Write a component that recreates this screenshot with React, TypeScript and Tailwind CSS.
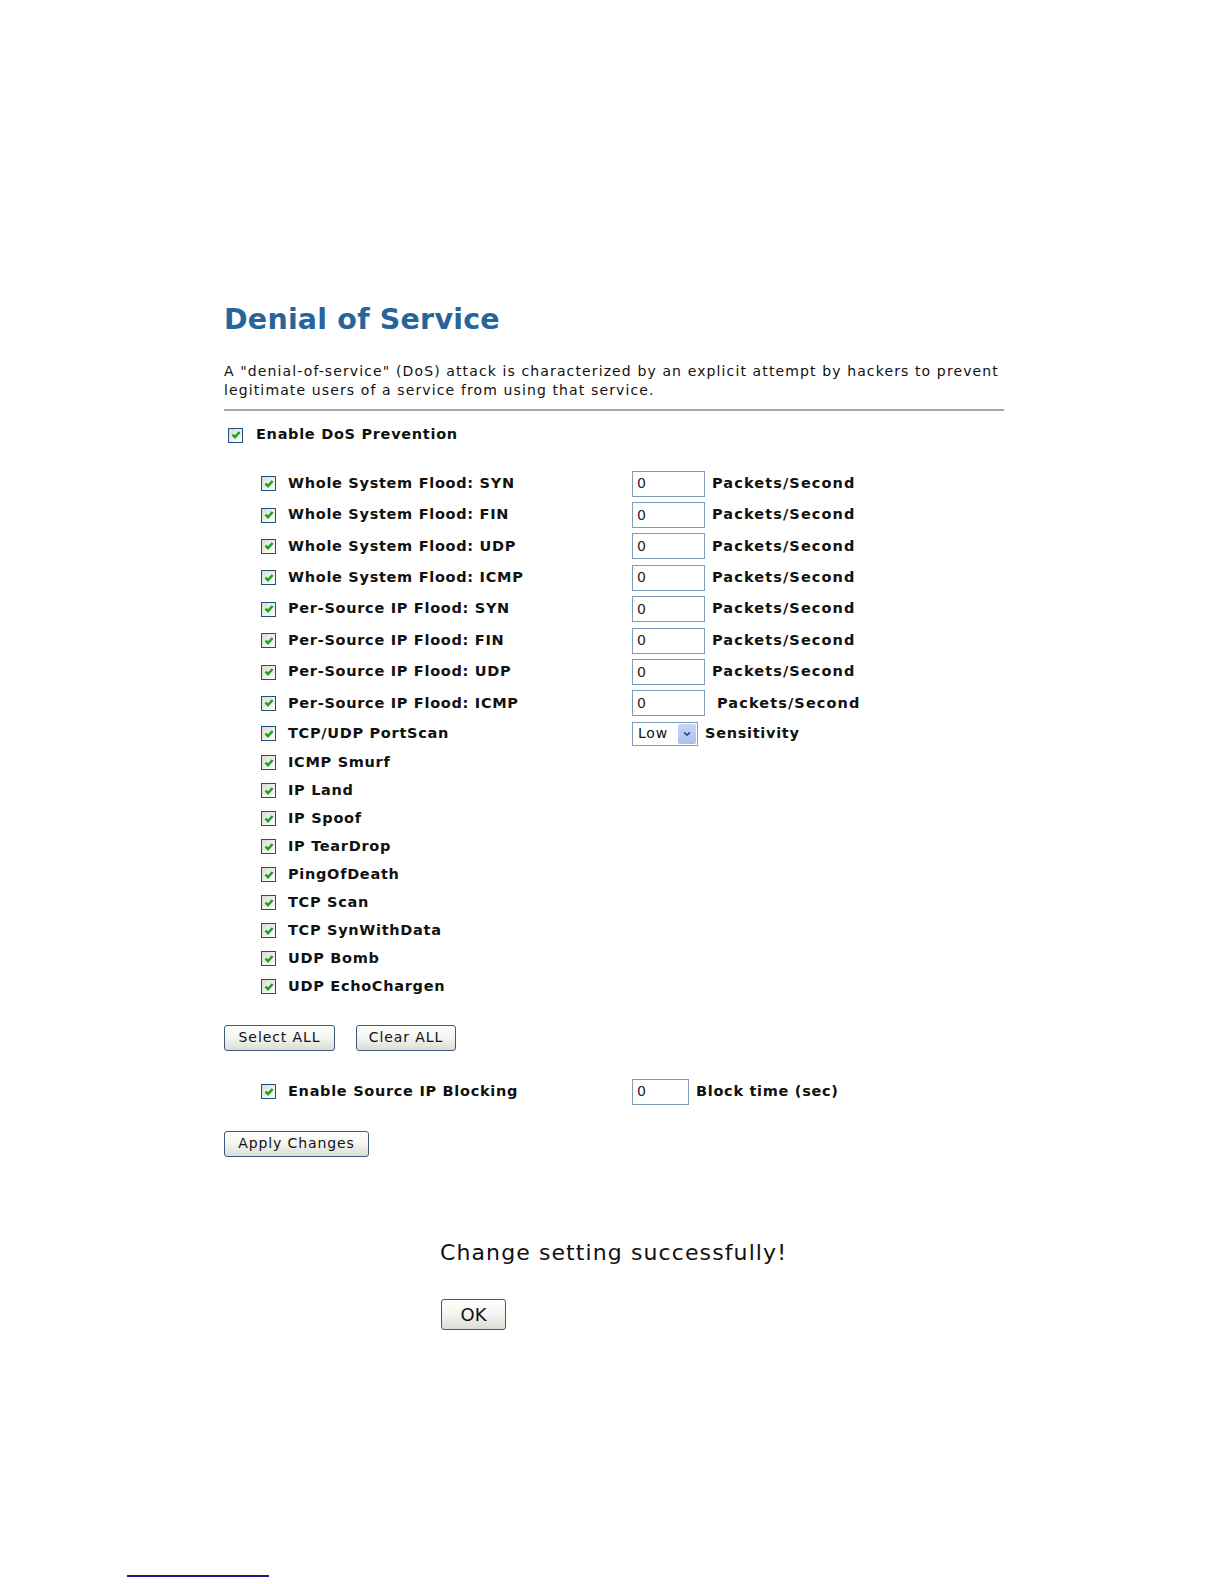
import React from 'react';

const FLOOD_ROWS = [
  'Whole System Flood: SYN',
  'Whole System Flood: FIN',
  'Whole System Flood: UDP',
  'Whole System Flood: ICMP',
  'Per-Source IP Flood: SYN',
  'Per-Source IP Flood: FIN',
  'Per-Source IP Flood: UDP',
  'Per-Source IP Flood: ICMP',
];

const PLAIN_ROWS = [
  'ICMP Smurf',
  'IP Land',
  'IP Spoof',
  'IP TearDrop',
  'PingOfDeath',
  'TCP Scan',
  'TCP SynWithData',
  'UDP Bomb',
  'UDP EchoChargen',
];

function Check() {
  return (
    <span className="w-[15px] h-[15px] shrink-0 border border-[#1c5180] bg-linear-to-br from-[#dcdcd4] to-white flex items-center justify-center">
      <svg viewBox="0 0 10 10" className="w-[10px] h-[10px]">
        <path d="M1.5 4.6 L4 7.1 L8.6 2" stroke="#21a121" strokeWidth="2.6" fill="none" />
      </svg>
    </span>
  );
}

function Box({ w }: { w: string }) {
  return (
    <div className={`${w} h-[26px] border border-[#7f9db9] bg-white flex items-center pl-[4px] text-[14px] text-[#222]`}>0</div>
  );
}

function Btn({ children, className }: { children: React.ReactNode; className: string }) {
  return (
    <button className={`${className} border border-[#3d5a7a] rounded-[3px] bg-linear-to-b from-white via-[#f4f4f0] to-[#dcdcd6] text-[#111] flex items-center justify-center`}>
      {children}
    </button>
  );
}

const LABEL = 'text-[14.5px] font-bold tracking-[0.7px]';

export default function App() {
  return (
    <div className="bg-white min-h-[1584px] w-[1224px] font-['DejaVu_Sans',Verdana,sans-serif] text-[#111]">
      <div className="pl-[224px] pt-[301px] w-[1004px]">
        <h1 className="text-[28.5px] font-bold text-[#28649c] leading-[38px] tracking-[0.2px]">Denial of Service</h1>

        <p className="mt-[23px] text-[14px] leading-[19px] tracking-[1.12px] whitespace-nowrap">
          A "denial-of-service" (DoS) attack is characterized by an explicit attempt by hackers to prevent<br />
          legitimate users of a service from using that service.
        </p>

        <div className="mt-[9px] h-[2px] w-[780px] bg-[#a8a8a8]" />

        <div className="mt-[15px] ml-[4px] flex items-center h-[18px] gap-[13px]">
          <Check />
          <span className={LABEL}>Enable DoS Prevention</span>
        </div>

        <div className="mt-[24px] ml-[37px]">
          {FLOOD_ROWS.map((label, i) => (
            <div key={label} className="flex items-center h-[31.4px]">
              <div className="w-[371px] flex items-center gap-[12px]">
                <Check />
                <span className={LABEL}>{label}</span>
              </div>
              <Box w="w-[73px]" />
              <span className={`text-[14.5px] font-bold tracking-[1.1px] ${i === 7 ? 'ml-[12px]' : 'ml-[7px]'}`}>Packets/Second</span>
            </div>
          ))}

          <div className="flex items-center h-[29.5px]">
            <div className="w-[371px] flex items-center gap-[12px]">
              <Check />
              <span className={LABEL}>TCP/UDP PortScan</span>
            </div>
            <div className="w-[66px] h-[24px] border border-[#7f9db9] bg-white flex items-center justify-between pl-[5px] pr-[1px] text-[14px] tracking-[0.8px]">
              <span>Low</span>
              <span className="w-[18px] h-[20px] rounded-[2px] bg-linear-to-b from-[#c8d6f5] to-[#a9bfee] flex items-center justify-center">
                <svg viewBox="0 0 10 10" className="w-[8px] h-[8px]">
                  <path d="M1.5 3 L5 6.5 L8.5 3" stroke="#2e3f6e" strokeWidth="2" fill="none" />
                </svg>
              </span>
            </div>
            <span className={`ml-[7px] ${LABEL}`}>Sensitivity</span>
          </div>

          {PLAIN_ROWS.map(label => (
            <div key={label} className="flex items-center h-[28px] gap-[12px]">
              <Check />
              <span className={LABEL}>{label}</span>
            </div>
          ))}
        </div>

        <div className="mt-[24px] flex gap-[21px]">
          <Btn className="w-[111px] h-[26px] text-[14px] tracking-[0.9px]">Select ALL</Btn>
          <Btn className="w-[100px] h-[26px] text-[14px] tracking-[0.9px]">Clear ALL</Btn>
        </div>

        <div className="mt-[28px] ml-[37px] flex items-center h-[26px]">
          <div className="w-[371px] flex items-center gap-[12px]">
            <Check />
            <span className={LABEL}>Enable Source IP Blocking</span>
          </div>
          <Box w="w-[57px]" />
          <span className={`ml-[7px] ${LABEL}`}>Block time (sec)</span>
        </div>

        <Btn className="mt-[26px] w-[145px] h-[26px] text-[14px] tracking-[0.9px]">Apply Changes</Btn>

        <div className="ml-[216px] mt-[82px]">
          <div className="text-[22px] leading-[28px] tracking-[1.1px] text-[#111]">Change setting successfully!</div>
          <Btn className="mt-[32px] ml-[1px] w-[65px] h-[31px] text-[18px]">OK</Btn>
        </div>
      </div>

      <div className="mt-[245px] ml-[127px] w-[142px] h-[2px] bg-[#1a1a8a]" />
    </div>
  );
}
